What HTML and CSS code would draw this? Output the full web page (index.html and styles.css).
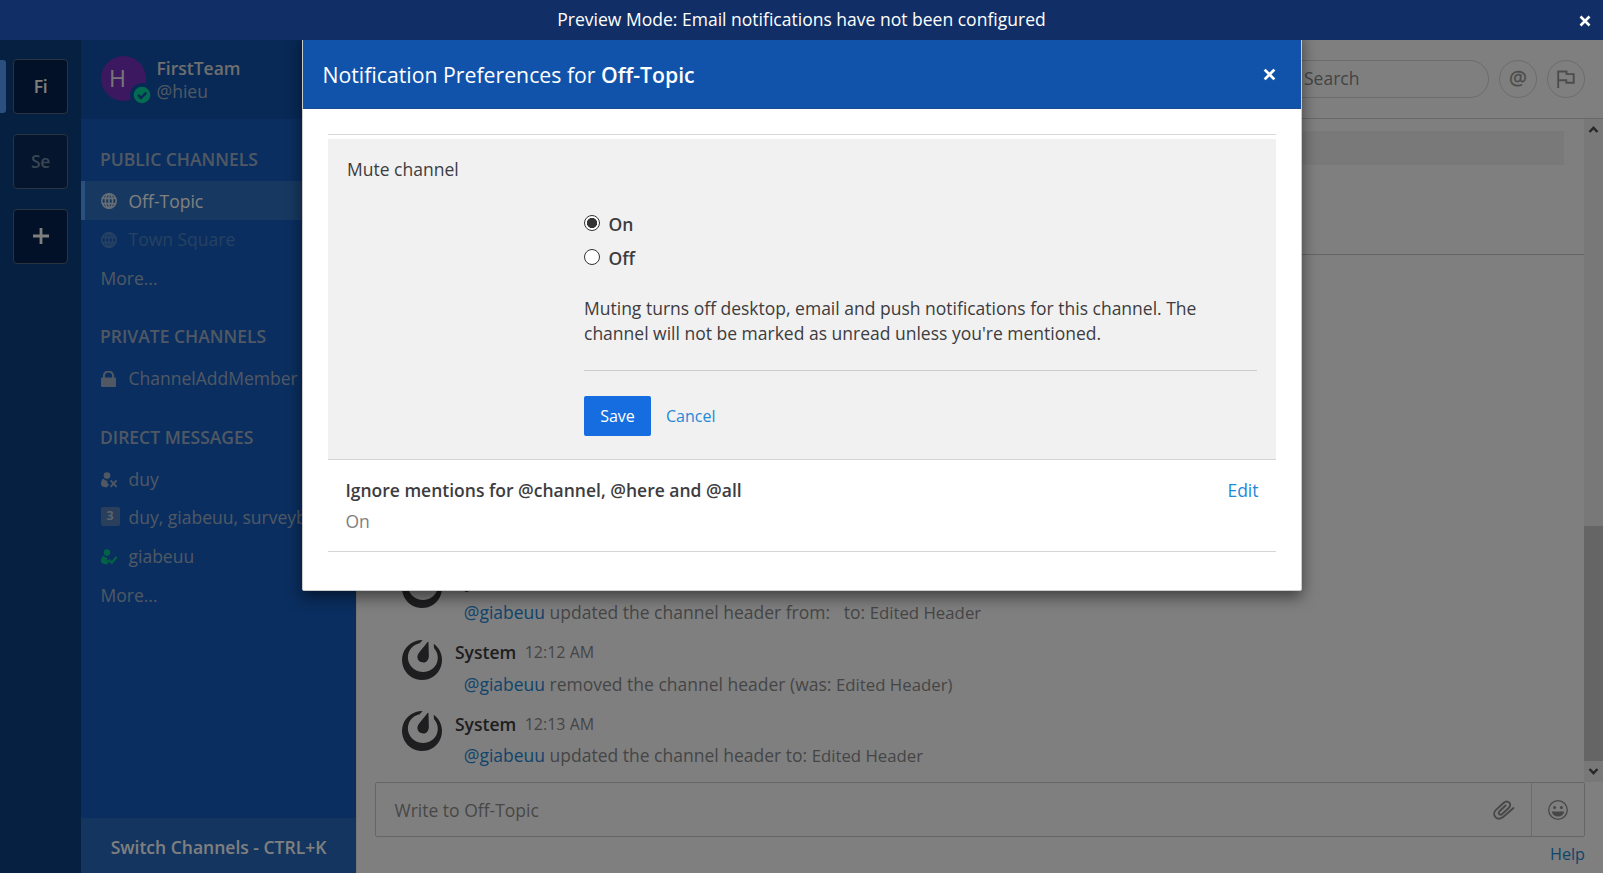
FILE: index.html
```html
<!DOCTYPE html>
<html lang="en">
<head>
<meta charset="utf-8">
<title>Off-Topic - FirstTeam</title>
<link rel="stylesheet" href="styles.css">
</head>
<body>
<svg width="0" height="0" class="defs">
  <symbol id="globe" viewBox="0 0 16 16"><g fill="none" stroke="currentColor" stroke-width="1.600"><circle cx="8" cy="8" r="7.200"/><ellipse cx="8" cy="8" rx="3.600" ry="7.200"/><path d="M8 .7v14.6M1.300 5.400h13.400M1.300 10.600h13.400"/></g></symbol>
  <symbol id="cross" viewBox="0 0 12 12"><path d="M1.500 1.500l9 9M10.500 1.500l-9 9" stroke="currentColor" stroke-width="2.600" fill="none"/></symbol>
  <symbol id="logo" viewBox="0 0 24 24"><path fill="currentColor" d="M12.081 0C7.048-.034 2.339 3.125.637 8.153c-2.125 6.276 1.24 13.086 7.516 15.21 6.276 2.125 13.086-1.24 15.21-7.516 1.727-5.1-.172-10.552-4.311-13.557l.126 2.547c2.065 2.282 2.88 5.512 1.852 8.549-1.534 4.532-6.594 6.915-11.3 5.321-4.708-1.593-7.28-6.559-5.745-11.092 1.031-3.046 3.655-5.121 6.694-5.67l1.642-1.94A4.87 4.87 0 0 0 12.08 0zm3.528 1.094a.284.284 0 0 0-.123.024l-.004.001a.33.33 0 0 0-.109.071c-.145.142-.657.828-.657.828L13.6 3.4l-1.3 1.585-2.232 2.776s-1.024 1.278-.798 2.851c.226 1.574 1.396 2.34 2.304 2.648.907.307 2.302.408 3.438-.704 1.135-1.112 1.098-2.75 1.098-2.75l-.087-3.56-.07-2.05-.047-1.775s.01-.856-.02-1.057a.33.33 0 0 0-.035-.107l-.006-.012-.007-.011a.277.277 0 0 0-.229-.14z"/></symbol>
  <symbol id="person" viewBox="0 0 16 16"><g fill="currentColor"><circle cx="6" cy="3.600" r="3.300"/><path d="M2.600 6.600C.7 7.600 0 9.500 0 12c0 2.200 2.600 3.300 5.500 3.300h.700L8 12.600 5.800 10.400 7 9.200C5 9 3.400 8 2.600 6.600z"/></g></symbol>
</svg>

<div class="announcement">
  <span>Preview Mode: Email notifications have not been configured</span>
  <svg class="announcement-close"><use href="#cross"/></svg>
</div>

<div class="app">
  <nav class="teams">
    <div class="team active">Fi</div>
    <div class="team">Se</div>
    <div class="team add"><svg viewBox="0 0 16 16"><path d="M8 0v16M0 8h16" stroke="currentColor" stroke-width="2.800"/></svg></div>
  </nav>

  <aside class="sidebar">
    <header class="sidebar-header">
      <div class="avatar">H
        <svg class="status" viewBox="0 0 24 24"><circle cx="12" cy="12" r="12" fill="#1153ab"/><circle cx="12" cy="12" r="8.300" fill="#06d6a0"/><path d="M8 12l3 3 5.200-5.400" fill="none" stroke="#1153ab" stroke-width="2.500"/></svg>
      </div>
      <div class="who"><div class="team-name">FirstTeam</div><div class="user-name">@hieu</div></div>
    </header>
    <div class="channels">
      <h4 class="first">PUBLIC CHANNELS</h4>
      <div class="channel current"><svg><use href="#globe"/></svg>Off-Topic</div>
      <div class="channel muted"><svg><use href="#globe"/></svg>Town Square</div>
      <div class="channel">More...</div>
      <h4>PRIVATE CHANNELS</h4>
      <div class="channel"><svg viewBox="0 0 16 16"><path d="M2.900 7V5a4.600 4.600 0 0 1 9.200 0v2" fill="none" stroke="currentColor" stroke-width="2"/><rect y="6.500" width="15" height="9.500" rx="1" fill="currentColor"/></svg>ChannelAddMember</div>
      <h4>DIRECT MESSAGES</h4>
      <div class="channel"><svg viewBox="0 0 16 16"><use href="#person" width="16" height="16"/><path d="M9.600 8.300l6 6.500M15.600 8.300l-6 6.500" stroke="currentColor" stroke-width="1.800"/></svg>duy</div>
      <div class="channel group"><span class="count">3</span>duy, giabeuu, surveybot</div>
      <div class="channel"><svg class="online" viewBox="0 0 16 16"><use href="#person" width="16" height="16"/><path d="M7.800 10.800l3 3 5-6" fill="none" stroke="currentColor" stroke-width="2.200"/></svg>giabeuu</div>
      <div class="channel">More...</div>
    </div>
    <div class="switcher">Switch Channels - CTRL+K</div>
  </aside>

  <main class="center">
    <header class="channel-header">
      <div class="search">Search</div>
      <div class="round at">@</div>
      <div class="round"><svg viewBox="0 0 18 18" width="18" height="18"><path d="M1.200 18V1.500h8.300v2.600h7.200v8.700H9.300v-2.600H1.200" fill="none" stroke="currentColor" stroke-width="1.900"/></svg></div>
    </header>
    <div class="feed">
      <div class="posts">
        <div class="banner-block"></div>
        <div class="intro-rule"></div>
        <div class="post-list">
          <article class="post"><svg class="pic"><use href="#logo"/></svg><div><div class="meta"><b>System</b><time>12:12 AM</time></div><p><a>@giabeuu</a> updated the channel header from: &nbsp; to: <small>Edited Header</small></p></div></article>
          <article class="post"><svg class="pic"><use href="#logo"/></svg><div><div class="meta"><b>System</b><time>12:12 AM</time></div><p><a>@giabeuu</a> removed the channel header (was: <small>Edited Header)</small></p></div></article>
          <article class="post last"><svg class="pic"><use href="#logo"/></svg><div><div class="meta"><b>System</b><time>12:13 AM</time></div><p><a>@giabeuu</a> updated the channel header to: <small>Edited Header</small></p></div></article>
        </div>
      </div>
      <div class="scrollbar">
        <svg viewBox="0 0 19 21"><path d="M5.500 13l4-4.200 4 4.200" fill="none" stroke="#505050" stroke-width="2.400"/></svg>
        <div class="thumb"></div>
        <svg viewBox="0 0 19 21"><path d="M5.500 8l4 4.200 4-4.200" fill="none" stroke="#505050" stroke-width="2.400"/></svg>
      </div>
    </div>
    <div class="composer">
      <span class="placeholder">Write to Off-Topic</span>
      <svg class="clip" viewBox="0 0 22 20"><path d="M20.500 8L11 16.200c-3.300 3-6.600 3-8.500 1s-1.800-5.200.7-7.600L10.500 3c1.900-1.700 4.300-1.700 5.700-.3s1.300 3.600-.5 5.300l-6.500 6c-1 .9-2.300 1-3 .2s-.6-2 .3-2.900L12.600 5.500" fill="none" stroke="currentColor" stroke-width="1.900" stroke-linecap="round"/></svg>
      <div class="emoji"><svg viewBox="0 0 20 20" width="20" height="20"><circle cx="10" cy="10" r="9.300" fill="none" stroke="currentColor" stroke-width="1.300"/><circle cx="6.600" cy="7.400" r="1.500" fill="currentColor"/><circle cx="13.400" cy="7.400" r="1.500" fill="currentColor"/><path d="M3.800 11.500h12.400c-.5 3.200-3 5-6.200 5s-5.700-1.800-6.200-5z" fill="currentColor"/></svg></div>
    </div>
    <div class="help"><a>Help</a></div>
  </main>

  <div class="backdrop"></div>
  <section class="modal">
    <header class="modal-header">
      <h1>Notification Preferences for <b>Off-Topic</b></h1>
      <svg class="modal-close"><use href="#cross"/></svg>
    </header>
    <div class="modal-body">
      <div class="setting open">
        <div class="setting-title">Mute channel</div>
        <div class="setting-form">
          <label class="choice"><span class="radio checked"></span>On</label>
          <label class="choice"><span class="radio"></span>Off</label>
          <p class="hint">Muting turns off desktop, email and push notifications for this channel. The channel will not be marked as unread unless you're mentioned.</p>
          <div class="actions"><button class="save">Save</button><a class="cancel">Cancel</a></div>
        </div>
      </div>
      <div class="setting closed">
        <div class="row"><b>Ignore mentions for @channel, @here and @all</b><a>Edit</a></div>
        <div class="value">On</div>
      </div>
    </div>
  </section>
</div>
</body>
</html>
```
FILE: styles.css
```css
* { box-sizing: border-box; }
body { margin: 0; height: 873px; overflow: hidden; font: 17.5px/25px "Open Sans", sans-serif; color: #3d3c40; display: flex; flex-direction: column; }
b { font-weight: 600; }
a { color: #2389d7; }
p, h1, h4 { margin: 0; }
.defs { position: absolute; }

.announcement { height: 40px; flex: none; background: #112f66; color: #fff; display: grid; grid-template-columns: 1fr auto 1fr; align-items: center; }
.announcement span { grid-column: 2; line-height: 38px; padding-bottom: 2px; letter-spacing: .01px; }
.announcement-close { width: 12px; height: 12px; justify-self: end; margin-right: 12.500px; margin-top: 1px; }

.app { flex: 1; display: flex; position: relative; overflow: hidden; }
.teams { width: 81px; background: #0d4185; padding: 19px 13px; display: flex; flex-direction: column; gap: 20px; }
.team { position: relative; width: 55px; height: 55px; border: 1px solid #53697f; border-radius: 4px; background: #082a5a; color: #748ba5; display: flex; align-items: center; justify-content: center; font-weight: 600; font-size: 17.500px; letter-spacing: -.4px; padding-bottom: 1px; }
.team.active, .team.add { color: #fff; background: #05234f; }
.team.active::before { content: ""; position: absolute; left: -17px; top: 0; width: 9px; height: 53px; border-radius: 3px; background: #579eff; }
.team.add svg { width: 16px; height: 16px; }

.sidebar { width: 275px; background: #145dbf; color: #a0b1c9; display: flex; flex-direction: column; }
.sidebar-header { height: 79px; background: #1153ab; padding: 16px 20px; display: flex; gap: 10.500px; }
.avatar { position: relative; width: 45px; height: 45px; border-radius: 50%; background: #7630c0; color: #f0ebf4; font-size: 23px; font-weight: 500; line-height: 44px; padding-left: 8px; }
.status { position: absolute; left: 29px; top: 27px; width: 24px; height: 24px; }
.team-name { color: #ddd; font-weight: 600; line-height: 23px; }
.user-name { line-height: 23px; }
.who { padding-top: 1px; }
.channels { flex: 1; white-space: nowrap; overflow: hidden; }
.channels h4 { height: 62.2px; padding: 20px 0 0 19px; line-height: 39px; font-size: 17.5px; font-weight: 600; }
.channels .first { line-height: 41px; }
.channel { height: 38.6px; padding: 1px 0 0 19.500px; display: flex; align-items: center; }
.channel.current { padding-top: 2px; }
.channel.group { padding-top: 0; }
.channel svg { width: 16px; height: 16px; margin-right: 12px; flex: none; }
.channel.current { background: #2e70c0; box-shadow: inset 4px 0 #579eff; color: #fff; }
.channel.current svg { color: #d0dcec; }
.channel.muted { color: #4f83c4; }
.count { width: 19px; height: 19px; margin: -2px 9px 0 0; border-radius: 2px; background: #537fb8; color: #b9c6d8; font: 700 12.5px/17px "Open Sans", sans-serif; text-align: center; }
.channel .online { color: #06c58a; }
.switcher { height: 55px; background: #266abf; color: #fff; font-weight: 600; line-height: 58px; text-align: center; }

.center { flex: 1; background: #fff; display: flex; flex-direction: column; border-left: 1px solid #eee; }
.channel-header { height: 79px; flex: none; border-bottom: 1px solid #d0d0d0; padding: 0 18px 1px 0; display: flex; justify-content: flex-end; align-items: center; gap: 10px; color: #909090; }
.search { width: 232px; height: 38px; border: 1px solid #d8d8d8; border-radius: 19px; padding-left: 46px; line-height: 34px; color: #888; }
.round { width: 38px; height: 38px; border: 1px solid #d8d8d8; border-radius: 50%; display: flex; align-items: center; justify-content: center; color: #999; }
.at { font-size: 20px; padding-bottom: 3px; -webkit-text-stroke: .3px; }
.feed { height: 663px; flex: none; display: flex; }
.posts { flex: 1; overflow: hidden; display: flex; flex-direction: column; }
.banner-block { height: 34px; flex: none; margin: 12px 20px 0 44px; background: #f3f3f3; }
.intro-rule { height: 90px; flex: none; border-bottom: 1px solid #cbcbcb; }
.post-list { padding: 309px 0 0 45px; }
.post { height: 71.5px; display: flex; gap: 13px; }
.pic { width: 40px; height: 40px; margin-top: 4px; color: #3d3c40; }
.meta { line-height: 25px; padding-top: 4.500px; display: flex; gap: 8.500px; }
.meta time { font-size: 16px; color: #8b8b8d; }
.post p { padding: 6.500px 0 0 8.700px; line-height: 25px; color: #8b8b8d; }
.last .meta { padding-top: 5px; }
.post.last p { padding-top: 6px; }
.post small { font-size: 16.800px; }
.scrollbar { width: 19px; background: #f1f1f1; display: flex; flex-direction: column; }
.scrollbar svg { width: 19px; height: 21px; }
.thumb { height: 235px; margin-top: 386px; background: #cbcbcb; }
.composer { height: 55px; flex: none; margin: 0 18px 0 18px; border: 1px solid #cdcdcd; border-radius: 2px; display: flex; align-items: center; color: #8f8f8f; }
.placeholder { flex: 1; padding: 2px 0 0 18.500px; }
.clip { width: 22px; height: 20px; margin-right: 16px; }
.emoji { width: 53px; align-self: stretch; border-left: 1px solid #d8d8d8; display: flex; align-items: center; justify-content: center; }
.help { text-align: right; padding-right: 18px; font-size: 16.200px; line-height: 34px; }

.backdrop { position: absolute; inset: 0; background: rgba(0, 0, 0, .5); }
.modal { position: absolute; left: 302px; top: -10px; width: 1000px; height: 561px; background: #fff; border: 1px solid #ccc; border-radius: 2px; box-shadow: 0 6px 15px rgba(0, 0, 0, .5); }
.modal-header { height: 78px; padding: 11px 25px 0 19.500px; background: #1153ab; border-bottom: 1px solid #194c92; color: #fff; display: flex; justify-content: space-between; align-items: center; }
.modal h1 { font-size: 21.25px; font-weight: 400; line-height: 30px; }
.modal-close { width: 13px; height: 13px; margin-bottom: 1px; }
.modal-body { margin: 25px; border-top: 1px solid #d8d8d8; padding-top: 4px; }
.setting { border-bottom: 1px solid #d5d5d5; }
.open { height: 321px; background: #f1f1f1; padding: 18px 19px 0 19px; }
.setting-form { margin-left: 237px; padding-top: 29px; }
.choice { display: flex; height: 34px; font-weight: 600; line-height: 27px; }
.radio { width: 16px; height: 16px; margin: 4px 8.500px 0 0; border: 1px solid #333; border-radius: 50%; background: #fff; }
.checked { background: radial-gradient(circle, #333 4.800px, #fff 5.400px); }
.hint { padding: 17px 0 24px; border-bottom: 1px solid #ccc; }
.actions { padding-top: 25px; display: flex; gap: 15px; align-items: center; font-size: 16px; }
.save { width: 67px; height: 40px; padding: 0; border: 0; border-radius: 2px; background: #166de0; color: #fff; font: 16px "Open Sans", sans-serif; }
.closed { height: 92px; padding: 18px 17.500px 0 17.400px; }
.row { display: flex; justify-content: space-between; }
.value { color: #808080; padding-top: 6px; }
```
